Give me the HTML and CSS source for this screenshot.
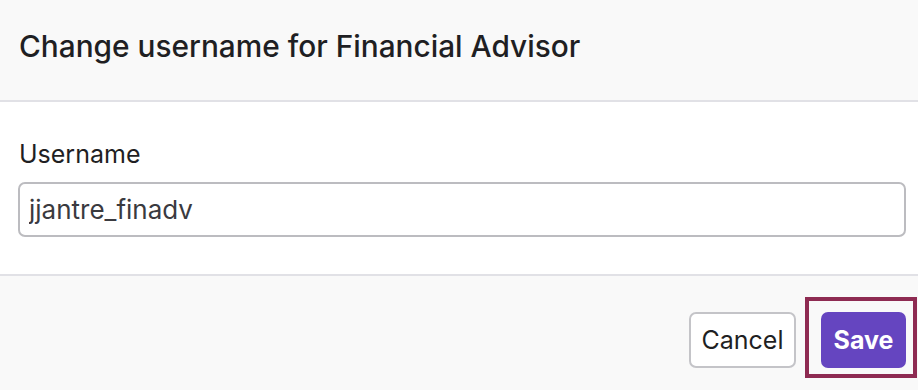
FILE: index.html
```html
<!DOCTYPE html>
<html lang="en">
<head>
  <meta charset="UTF-8" />
  <title>Change username</title>
  <link rel="stylesheet" href="styles.css">
</head>
<body>

  <div class="modal">
    <!-- header -->
    <div class="modal-header">
      <h2>Change username for Financial Advisor</h2>
    </div>

    <!-- body -->
    <div class="modal-body">
      <label for="username">Username</label>
      <input type="text" id="username" value="jjantre_finadv" />
    </div>

    <!-- footer -->
    <div class="modal-footer">
      <button class="btn btn-cancel">Cancel</button>
      <div class="save-wrap">
        <button class="btn btn-save">Save</button>
        <span class="highlight"></span>
      </div>
    </div>
  </div>

</body>
</html>
```

FILE: styles.css
```css
* {
  margin: 0;
  padding: 0;
  box-sizing: border-box;
}

body {
  font-family: Inter, "Noto Sans", sans-serif;
  color: #1f1f23;
  background: #ffffff;
}

.modal {
  width: 918px;
  height: 390px;
  display: flex;
  flex-direction: column;
}

.modal-header {
  height: 102px;
  background: #f9f9f9;
  border-bottom: 2px solid #e1e1e6;
  display: flex;
  align-items: center;
  padding: 0 19px 8px;
}

.modal-header h2 {
  font-size: 29.8px;
  font-weight: 500;
  line-height: 36px;
}

.modal-body {
  height: 174px;
  padding: 37px 12px 0 18px;
  border-bottom: 2px solid #e1e1e6;
}

.modal-body label {
  display: block;
  font-size: 25px;
  line-height: 30px;
  margin-left: 1px;
  margin-bottom: 13px;
}

.modal-body input {
  width: 100%;
  height: 55px;
  border: 2px solid #bcbcc0;
  border-radius: 7px;
  padding: 0 9px;
  font-family: inherit;
  font-size: 26px;
  color: #3a3a3f;
  outline: none;
}

.modal-footer {
  flex: 1;
  background: #f9f9f9;
  display: flex;
  justify-content: flex-end;
  align-items: flex-start;
  gap: 25px;
  padding: 36px 12px 0 0;
}

.btn {
  height: 56px;
  border-radius: 7px;
  font-family: inherit;
  font-size: 25px;
  cursor: pointer;
}

.btn-cancel {
  width: 107px;
  background: #ffffff;
  border: 2px solid #c4c4c8;
  color: #1f1f23;
}

.save-wrap {
  position: relative;
}

.btn-save {
  width: 85px;
  background: #6545c0;
  border: none;
  color: #ffffff;
  font-weight: 700;
}

.highlight {
  position: absolute;
  left: -16px;
  top: -15px;
  width: 112px;
  height: 81px;
  border: 4px solid #8e2b52;
  pointer-events: none;
}
```
